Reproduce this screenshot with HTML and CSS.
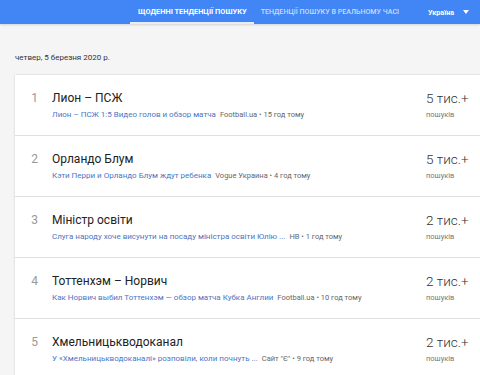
FILE: index.html
```html
<!DOCTYPE html>
<html lang="uk">
<head>
    <meta charset="UTF-8">
    <meta name="viewport" content="width=device-width, initial-scale=1.0">
    <title>Тенденції пошуку</title>
    <link rel="stylesheet" href="styles.css">
</head>
<body>
    <div class="header">
        <div class="tabs">
            <a class="tab active">Щоденні тенденції пошуку</a>
            <a class="tab">Тенденції пошуку в реальному часі</a>
        </div>
        <div class="geo">
            <span>Україна</span>
            <svg width="6" height="4" viewBox="0 0 6 4"><path d="M0 0h6L3 4z" fill="#fff"/></svg>
        </div>
    </div>

    <div class="content">
        <div class="date">четвер, 5 березня 2020 р.</div>

        <div class="card">
            <div class="row">
                <div class="num">1</div>
                <div class="info">
                    <div class="title">Лион – ПСЖ</div>
                    <div class="sub"><span class="link">Лион – ПСЖ 1:5 Видео голов и обзор матча</span><span class="source">Football.ua • 15 год тому</span></div>
                </div>
                <div class="count">
                    <div class="value">5 тис.+</div>
                    <div class="label">пошуків</div>
                </div>
            </div>
            <div class="row">
                <div class="num">2</div>
                <div class="info">
                    <div class="title">Орландо Блум</div>
                    <div class="sub"><span class="link">Кэти Перри и Орландо Блум ждут ребенка</span><span class="source">Vogue Украина • 4 год тому</span></div>
                </div>
                <div class="count">
                    <div class="value">5 тис.+</div>
                    <div class="label">пошуків</div>
                </div>
            </div>
            <div class="row">
                <div class="num">3</div>
                <div class="info">
                    <div class="title">Міністр освіти</div>
                    <div class="sub"><span class="link">Слуга народу хоче висунути на посаду міністра освіти Юлію ...</span><span class="source">НВ • 1 год тому</span></div>
                </div>
                <div class="count">
                    <div class="value">2 тис.+</div>
                    <div class="label">пошуків</div>
                </div>
            </div>
            <div class="row">
                <div class="num">4</div>
                <div class="info">
                    <div class="title">Тоттенхэм – Норвич</div>
                    <div class="sub"><span class="link">Как Норвич выбил Тоттенхэм — обзор матча Кубка Англии</span><span class="source">Football.ua • 10 год тому</span></div>
                </div>
                <div class="count">
                    <div class="value">2 тис.+</div>
                    <div class="label">пошуків</div>
                </div>
            </div>
            <div class="row">
                <div class="num">5</div>
                <div class="info">
                    <div class="title">Хмельницькводоканал</div>
                    <div class="sub"><span class="link">У «Хмельницькводоканалі» розповіли, коли почнуть ...</span><span class="source">Сайт "Є" • 9 год тому</span></div>
                </div>
                <div class="count">
                    <div class="value">2 тис.+</div>
                    <div class="label">пошуків</div>
                </div>
            </div>
        </div>
    </div>
</body>
</html>
```

FILE: styles.css
```css
body {
    margin: 0;
    padding: 0;
    font-family: Roboto, "Noto Sans", sans-serif;
    background: #f5f5f5;
    overflow: hidden;
}

.header {
    height: 24px;
    background: #4285f4;
    display: flex;
    align-items: stretch;
    padding-left: 130px;
    box-shadow: 0 1px 2px rgba(0, 0, 0, 0.15);
}

.tabs {
    display: flex;
}

.tab {
    display: flex;
    align-items: center;
    padding: 0 7px 0 8px;
    font-size: 7.4px;
    font-weight: 500;
    text-transform: uppercase;
    color: rgba(255, 255, 255, 0.72);
    border-bottom: 2px solid transparent;
    box-sizing: border-box;
}

.tab + .tab {
    padding-left: 7px;
    font-size: 7.1px;
}

.tab.active {
    color: #fff;
    font-weight: 700;
    border-bottom-color: #e8eef9;
}

.geo {
    margin-left: 22px;
    display: flex;
    align-items: center;
    gap: 9px;
    color: #fff;
    font-size: 7.2px;
    font-weight: 700;
}

.content {
    padding: 0 0 0 15px;
}

.date {
    font-size: 8px;
    color: #333;
    padding: 29px 0 0 0;
    height: 22px;
    line-height: 10px;
}

.card {
    background: #fff;
    margin-right: -4px;
    box-shadow: 0 0 2px rgba(0, 0, 0, 0.18);
}

.row {
    display: flex;
    height: 61px;
    border-bottom: 1px solid #e0e0e0;
    box-sizing: border-box;
}

.row:last-child {
    border-bottom: none;
}

.num {
    width: 37px;
    padding-top: 15px;
    box-sizing: border-box;
    text-align: center;
    padding-left: 2px;
    font-size: 12px;
    color: #999;
    line-height: 16px;
}

.info {
    flex: 1;
    padding-top: 14px;
}

.title {
    font-size: 12px;
    color: #222;
    line-height: 18px;
}

.sub {
    margin-top: 3px;
    font-size: 8px;
    line-height: 10px;
    white-space: nowrap;
}

.link {
    color: #4a76c4;
    margin-right: 4px;
}

.source {
    color: #666;
    font-size: 7.5px;
}

.count {
    width: 58px;
    padding-top: 13px;
}

.value {
    font-size: 13.5px;
    font-weight: 300;
    color: #333;
    line-height: 20px;
}

.label {
    margin-top: 2px;
    font-size: 7.5px;
    color: #777;
    line-height: 10px;
}
```
